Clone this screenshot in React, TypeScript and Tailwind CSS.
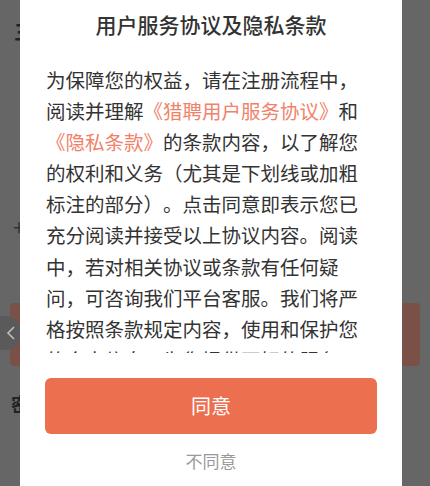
import React from 'react'

const FONT = { fontFamily: '"Noto Sans CJK SC", "Noto Sans", sans-serif' }

function BehindPage() {
  // the page under the dimmed overlay, only slivers show at the edges
  return (
    <div className="relative h-[486px] w-[430px] overflow-hidden bg-[#666666]">
      <div className="flex flex-col">
        <div className="pl-[14px] pt-[20px] text-[20px] leading-[24px] font-bold text-[#222]">三</div>
        <div className="pl-[13px] pt-[170px] text-[22px] leading-[24px] text-[#333]">+</div>
        <div className="mx-[10px] mt-[65px] h-[63px] rounded-[4px] bg-[#7b5147]" />
        <div className="pl-[11px] pt-[26px] text-[19px] leading-[24px] font-bold text-[#222]">密码登录</div>
      </div>
      <div className="absolute left-[-12px] top-[316px] flex h-[34px] w-[34px] items-center justify-center rounded-full bg-[#5a5a5a]">
        <svg width="10" height="16" viewBox="0 0 10 16" className="ml-[12px]">
          <path d="M8 2 L2 8 L8 14" fill="none" stroke="#bdbdbd" strokeWidth="1.6" />
        </svg>
      </div>
    </div>
  )
}

export default function App() {
  const link = 'text-[#f0826a]'
  return (
    <div className="relative h-[486px] w-[430px] overflow-hidden" style={FONT}>
      <BehindPage />
      <div className="absolute inset-y-0 left-[20px] flex w-[382px] flex-col bg-white [text-spacing-trim:space-all]">
        <h2 className="pt-[10px] text-center text-[21px] leading-[28px] font-medium text-[#333]">
          用户服务协议及隐私条款
        </h2>
        <div className="mt-[26px] h-[289px] overflow-hidden px-[26px]">
          <p className="text-[19.5px] leading-[31.1px] text-[#333]">
            为保障您的权益，请在注册流程中，阅读并理解<span className={link}>《猎聘用户服务协议》</span>和
            <span className={link}>《隐私条款》</span>的条款内容，以了解您的权利和义务（尤其是下划线或加粗标注的部分）。点击同意即表示您已充分阅读并接受以上协议内容。阅读中，若对相关协议或条款有任何疑问，可咨询我们平台客服。我们将严格按照条款规定内容，使用和保护您的个人信息，为您提供更好的服务。
          </p>
        </div>
        <button className="mx-[25px] mt-[25px] h-[56px] rounded-[6px] bg-[#ec6f4f] text-[20px] text-white">
          同意
        </button>
        <button className="mt-[15px] text-[17px] leading-[24px] text-[#999]">不同意</button>
      </div>
    </div>
  )
}
